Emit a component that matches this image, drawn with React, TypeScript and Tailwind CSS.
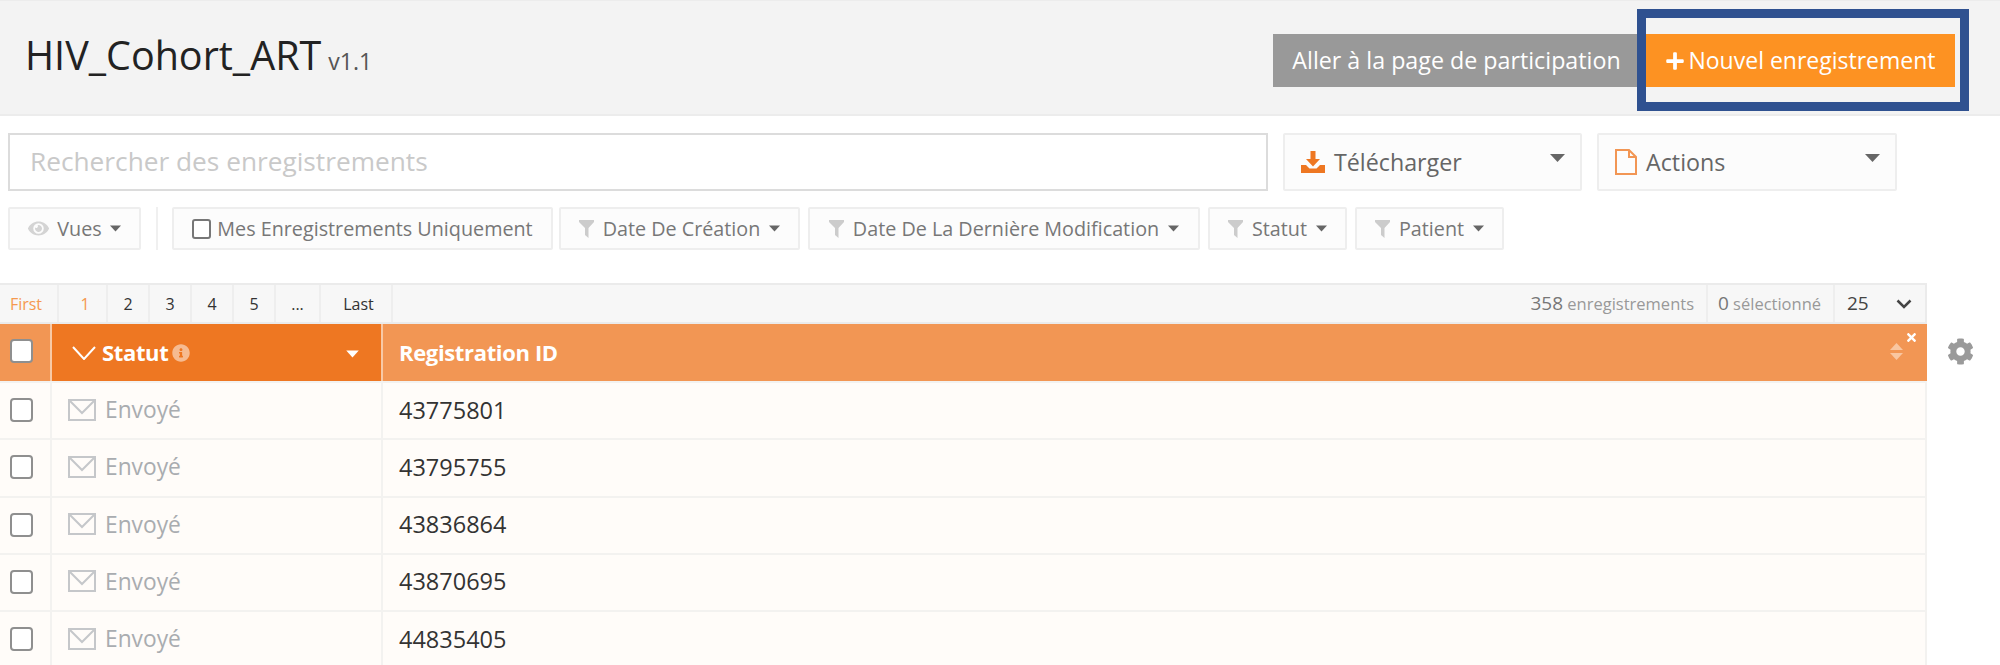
import { FaCog, FaEye, FaInfoCircle, FaPlus, FaTimes } from "react-icons/fa";

const font = "font-['Open_Sans',sans-serif]";

function Caret({ className = "" }: { className?: string }) {
  return (
    <svg className={className} width="11" height="7" viewBox="0 0 11 7" fill="currentColor">
      <path d="M0 0.5h11L5.5 6.5z" />
    </svg>
  );
}

function Funnel() {
  return (
    <svg className="w-[15px] h-[18px] text-[#cccccc]" viewBox="0 0 15 18" fill="currentColor">
      <path d="M0 0h15v2L9.5 8v10L6 15V8L0 2z" />
    </svg>
  );
}

function Envelope() {
  return (
    <svg className="w-7 h-[22px] -mt-[2px] text-[#c5c7ca]" viewBox="0 0 28 22" fill="none" stroke="currentColor" strokeWidth="2">
      <rect x="1" y="1" width="26" height="20" />
      <path d="M1.5 1.5L14 14L26.5 1.5" />
    </svg>
  );
}

function Box({ className = "" }: { className?: string }) {
  return <span className={`block w-[23px] h-[24px] rounded-[4px] border-2 border-[#8f8f8f] bg-white ${className}`} />;
}

function FilterBtn({ label, width }: { label: string; width: string }) {
  return (
    <div className={`${width} h-[43px] flex items-center justify-center gap-[9px] border-2 border-[#eeeeee] rounded-[2px] bg-[#fcfcfc] text-[#777] text-[19.75px]`}>
      <Funnel />
      <span>{label}</span>
      <Caret className="text-[#666]" />
    </div>
  );
}

const pages = [
  { label: "First", w: "w-[59px] pr-[5px]", on: true },
  { label: "1", w: "w-[49px] pl-[5px]", on: true },
  { label: "2", w: "w-[42px]", on: false },
  { label: "3", w: "w-[42px]", on: false },
  { label: "4", w: "w-[42px]", on: false },
  { label: "5", w: "w-[42px]", on: false },
  { label: "...", w: "w-[45px]", on: false },
  { label: "Last", w: "w-[72px] pl-[5px]", on: false },
];

const rows = ["43775801", "43795755", "43836864", "43870695", "44835405"];

export default function App() {
  return (
    <div className={`relative w-[2000px] h-[665px] overflow-hidden bg-white ${font}`}>
      {/* Highlight frame around the new record button */}
      <div className="absolute left-[1637px] top-[9px] w-[332px] h-[102px] border-[9px] border-[#2f5190] z-10" />

      {/* Title bar */}
      <header className="h-[116px] flex items-center justify-between bg-[#f3f3f3] border-b-2 border-t border-[#ececec] pl-[25px] pr-[45px]">
        <h1 className="flex items-baseline gap-[7px] text-[#222] text-[39.5px] -mt-[4px]">
          HIV_Cohort_ART
          <span className="text-[23px] text-[#555]">v1.1</span>
        </h1>
        <div className="flex items-center mt-[6px]">
          <button className="w-[373px] h-[53px] pr-[6px] bg-[#999999] text-white text-[23.25px]">Aller à la page de participation</button>
          <button className="w-[309px] h-[53px] bg-[#fd9222] text-white text-[23px] flex items-center justify-center gap-[3px]">
            <FaPlus className="w-[20px] h-[20px]" />
            Nouvel enregistrement
          </button>
        </div>
      </header>

      {/* Search and dropdowns */}
      <div className="flex pl-[8px] pt-[17px] gap-[15px]">
        <div className="w-[1260px] h-[58px] flex items-center border-2 border-[#dcdcdc] pl-[20px] text-[26.25px] text-[#c9c9c9]">
          Rechercher des enregistrements
        </div>
        <div className="w-[299px] h-[58px] flex border-2 border-[#eeeeee] rounded-[2px] bg-[#fcfcfc] pl-[16px] pr-[15px] text-[23.25px] text-[#666]">
          <div className="flex items-center gap-[9px] flex-1">
            <svg className="w-[24px] h-[24px] text-[#ee7722]" viewBox="0 0 24 24" fill="currentColor">
              <path d="M9.5 1h5v8h4.5l-7 7.5L5 9h4.5z" />
              <path d="M0 15h5l3.5 3.5h7L19 15h5v8H0z" />
            </svg>
            Télécharger
          </div>
          <Caret className="mt-[18px] w-[15px] h-[10px] text-[#666]" />
        </div>
        <div className="w-[300px] h-[58px] flex border-2 border-[#eeeeee] rounded-[2px] bg-[#fcfcfc] pl-[16px] pr-[15px] text-[23.25px] text-[#666]">
          <div className="flex items-center gap-[9px] flex-1">
            <svg className="w-[22px] h-[26px] text-[#f29654]" viewBox="0 0 22 26" fill="none" stroke="currentColor" strokeWidth="2">
              <path d="M1 1h13l7 7v17H1z" />
              <path d="M14 1v7h7" />
            </svg>
            Actions
          </div>
          <Caret className="mt-[18px] w-[15px] h-[10px] text-[#666]" />
        </div>
      </div>

      {/* Filters */}
      <div className="flex items-center pl-[8px] pt-[16px] gap-[8px] text-[19.75px] text-[#777]">
        <div className="w-[133px] h-[43px] flex items-center justify-center gap-[8px] border-2 border-[#eeeeee] rounded-[2px] bg-[#fcfcfc]">
          <FaEye className="w-[21px] h-[21px] text-[#d4d4d4]" />
          <span>Vues</span>
          <Caret className="text-[#666]" />
        </div>
        <div className="w-[2px] h-[43px] bg-[#f0f0f0] ml-[7px] mr-[6px]" />
        <div className="w-[381px] -mr-[2px] h-[43px] flex items-center justify-center gap-[6px] border-2 border-[#eeeeee] rounded-[2px] bg-[#fcfcfc]">
          <span className="block w-[19px] h-[20px] rounded-[3px] border-2 border-[#777] bg-white" />
          <span>Mes Enregistrements Uniquement</span>
        </div>
        <FilterBtn label="Date De Création" width="w-[241px]" />
        <FilterBtn label="Date De La Dernière Modification" width="w-[392px]" />
        <FilterBtn label="Statut" width="w-[139px]" />
        <FilterBtn label="Patient" width="w-[149px]" />
      </div>

      <div className="flex mt-[33px]">
        {/* Table */}
        <div className="w-[1927px]">
          <div className="h-[41px] flex items-stretch bg-[#f7f7f7] border-t-2 border-r-2 border-b-2 border-[#ebebeb]">
            {pages.map((p) => (
              <div
                key={p.label}
                className={`${p.w} text-[16px] flex items-center justify-center border-r-2 border-[#eeeeee] ${p.on ? "text-[#f5994f]" : "text-[#333]"}`}
              >
                {p.label}
              </div>
            ))}
            <div className="flex-1 flex items-center justify-end pr-[12px] text-[#999] text-[16.5px]">
              <span><span className="text-[#777] text-[19px]">358</span> enregistrements</span>
            </div>
            <div className="w-[127px] flex items-center justify-center pr-[2px] border-l-2 border-[#eeeeee] text-[#999] text-[16.5px]">
              <span><span className="text-[#777] text-[19px]">0</span> sélectionné</span>
            </div>
            <div className="w-[92px] flex items-center justify-between pl-[12px] pr-[13px] border-l-2 border-[#eeeeee] text-[#444] text-[19px]">
              25
              <svg className="w-[16px] h-[10px] text-[#444]" viewBox="0 0 16 10" fill="none" stroke="currentColor" strokeWidth="2.5">
                <path d="M1.5 1.5L8 8l6.5-6.5" />
              </svg>
            </div>
          </div>

          <div className="relative h-[57px] flex bg-[#f29654] text-white font-bold text-[22px] tracking-[-0.35px]">
            <div className="w-[52px] flex items-center justify-center border-r-2 border-[#f8c9a6]">
              <Box className="-ml-[8px] -mt-[3px]" />
            </div>
            <div className="w-[331px] flex items-center pl-[20px] bg-[#ee7722] border-r-2 border-[#f8c9a6]">
              <svg className="w-[24px] h-[14px] mr-[6px]" viewBox="0 0 24 14" fill="none" stroke="currentColor" strokeWidth="2">
                <path d="M1 1l11 12L23 1" />
              </svg>
              <span>Statut</span>
              <FaInfoCircle className="w-[18px] h-[18px] ml-[4px] text-[#f6bb91]" />
              <Caret className="ml-auto mr-[22px] w-[13px] h-[8px] mt-[3px]" />
            </div>
            <div className="flex-1 flex items-center pl-[16px]">Registration ID</div>
            <FaTimes className="absolute right-[9px] top-[7px] w-[13px] h-[13px]" />
            <svg className="absolute right-[24px] top-[19px] w-[13px] h-[17px] text-[#f9c6a0]" viewBox="0 0 13 17" fill="currentColor">
              <path d="M6.5 0L13 7H0z" />
              <path d="M0 10h13l-6.5 7z" />
            </svg>
          </div>

          {rows.map((id) => (
            <div key={id} className="h-[57.25px] flex bg-[#fffcf9] border-t-2 border-[#f3f2f0] border-r-2">
              <div className="w-[52px] flex items-center justify-center border-r-2 border-[#f3f2f0]">
                <Box className="-ml-[8px] -mt-[1px]" />
              </div>
              <div className="w-[331px] flex items-center gap-[9px] pl-[16px] border-r-2 border-[#f3f2f0] text-[#a9acb0] text-[22.75px]">
                <Envelope />
                <span className="-mt-[1px]">Envoyé</span>
              </div>
              <div className="flex-1 flex items-center pl-[16px] text-[#333] text-[23.5px]">
                <span className="-mt-[1px]">{id}</span>
              </div>
            </div>
          ))}
        </div>

        <div className="pl-[20px] pt-[55px]">
          <FaCog className="w-[27px] h-[27px] text-[#9a9a9a]" />
        </div>
      </div>
    </div>
  );
}
